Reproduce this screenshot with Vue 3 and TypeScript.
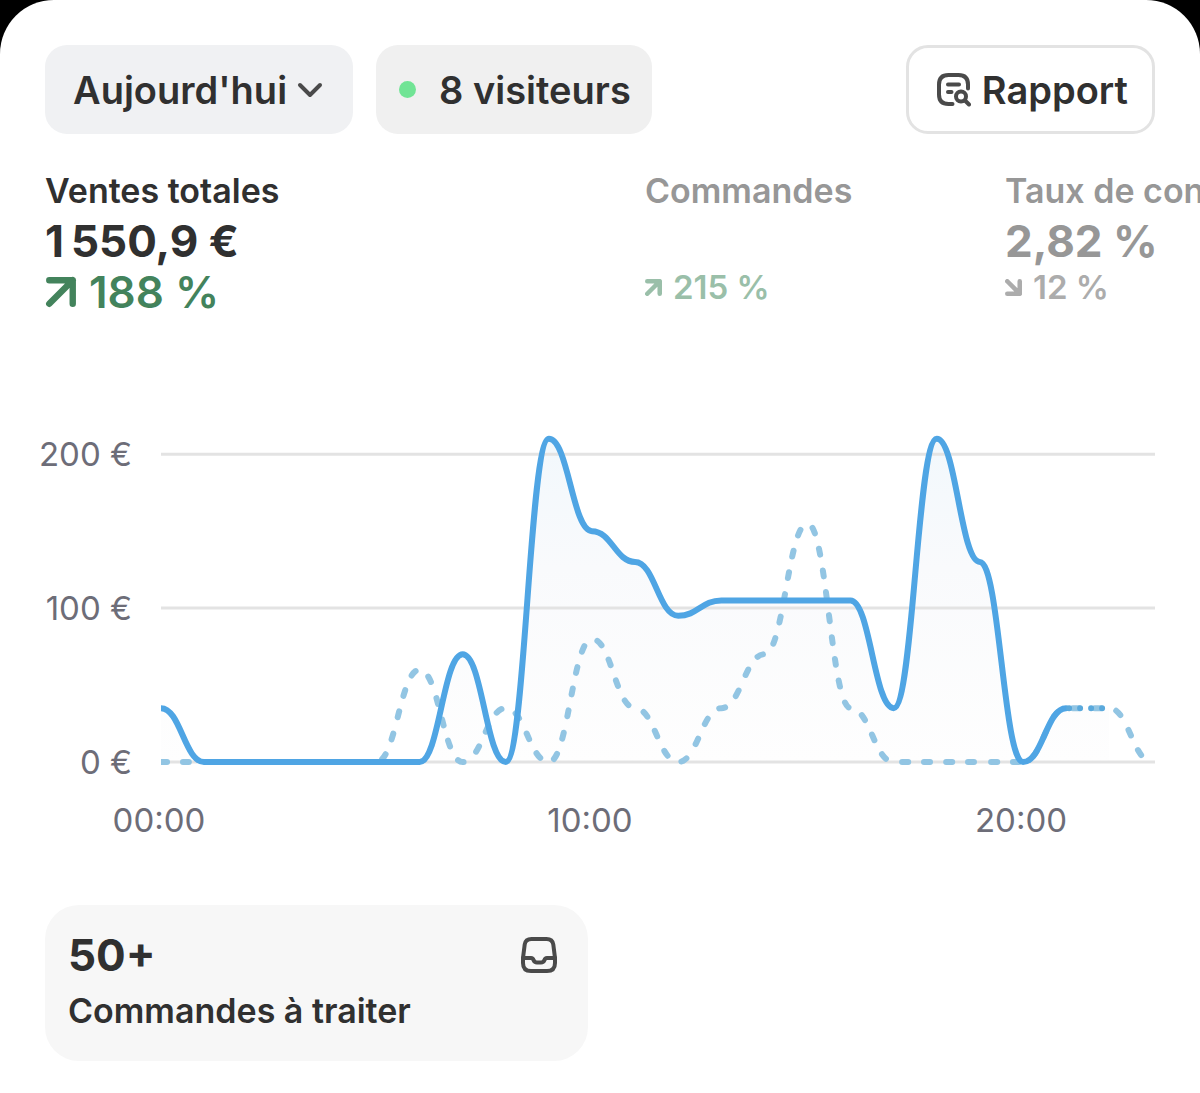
<script setup lang="ts">
interface Metric {
  name: string
  value: string
  delta: string
  trend: 'up' | 'down'
}

const metrics: Metric[] = [
  { name: 'Ventes totales', value: '1\u202f550,9 €', delta: '188 %', trend: 'up' },
  { name: 'Commandes', value: '', delta: '215 %', trend: 'up' },
  { name: 'Taux de conversion', value: '2,82 %', delta: '12 %', trend: 'down' },
]

// Hourly sales in euros
const today: number[] = [35, 0, 0, 0, 0, 0, 0, 70, 0, 210, 150, 130, 95, 105, 105, 105, 105, 35, 210, 130, 0, 35]
const yesterday: number[] = [0, 0, 0, 0, 0, 0, 60, 0, 35, 0, 80, 35, 0, 35, 70, 155, 35, 0, 0, 0, 0, 35, 35, 0]

const left = 161
const right = 1155
const base = 352
const stepX = 43.1
const euro = 1.539
const tension = 0.45

const xAt = (hour: number): number => left + hour * stepX
const yAt = (value: number): number => base - value * euro

function curve(values: number[]): string {
  let d = `M${xAt(0)} ${yAt(values[0])}`
  for (let i = 1; i < values.length; i++) {
    const k = stepX * tension
    d += `C${xAt(i - 1) + k} ${yAt(values[i - 1])} ${xAt(i) - k} ${yAt(values[i])} ${xAt(i)} ${yAt(values[i])}`
  }
  return d
}

const todayLine = curve(today)
const yesterdayLine = curve(yesterday)
const area = `${todayLine}H${xAt(22)}V${base}H${left}Z`
const projection = `M${xAt(21) + 3} ${yAt(35)}H${xAt(22)}`

const yTicks = [200, 100, 0]
const xTicks = [
  { hour: 0, label: '00:00' },
  { hour: 10, label: '10:00' },
  { hour: 20, label: '20:00' },
]
</script>

<template>
  <main class="sheet">
    <header class="toolbar">
      <button type="button" class="chip period">
        Aujourd'hui
        <svg class="chevron" viewBox="0 0 26 16" aria-hidden="true"><path d="M3 3l10 10L23 3" /></svg>
      </button>
      <div class="chip visitors"><span class="dot"></span>8 visiteurs</div>
      <button type="button" class="chip report">
        <svg class="report-icon" viewBox="0 0 34 34" aria-hidden="true">
          <path d="M15.500 31H11.500Q2 31 2 21.500V11.500Q2 2 11.500 2H21.500Q31 2 31 11.500V15.500" />
          <path d="M11 11.500H22M11 19H14.500" />
          <circle cx="24" cy="23.500" r="5" />
          <path d="M28 27.500L32 31.500" />
        </svg>
        Rapport
      </button>
    </header>

    <section class="metrics">
      <div v-for="(m, i) in metrics" :key="m.name" class="metric" :class="{ active: i === 0 }">
        <h2 class="name">{{ m.name }}</h2>
        <p class="value">{{ m.value }}</p>
        <p class="delta" :class="m.trend">
          <svg class="arrow" viewBox="0 0 30 30" aria-hidden="true">
            <path v-if="m.trend === 'up'" d="M4 4H26V26M26 4L4 26" />
            <path v-else d="M26 4V26H4M26 26L4 4" />
          </svg>
          {{ m.delta }}
        </p>
      </div>
    </section>

    <svg class="chart" viewBox="0 0 1200 440" role="img" aria-label="Ventes totales par heure">
      <defs>
        <linearGradient id="fade" x1="0" y1="0" x2="0" y2="1">
          <stop offset="0" stop-color="#f2f8fc" />
          <stop offset="0.4" stop-color="#f9fafc" />
          <stop offset="1" stop-color="#fefefe" />
        </linearGradient>
        <clipPath id="plot"><rect :x="left" y="0" :width="right - left" height="360" /></clipPath>
      </defs>
      <path :d="area" fill="url(#fade)" />
      <g v-for="t in yTicks" :key="t">
        <line class="grid" :x1="left" :x2="right" :y1="yAt(t)" :y2="yAt(t)" />
        <text class="tick" x="132" :y="yAt(t) + 12" text-anchor="end">{{ t }} €</text>
      </g>
      <g clip-path="url(#plot)">
        <path class="line yesterday" :d="yesterdayLine" />
        <path class="line today" :d="todayLine" />
        <path class="line projection" :d="projection" />
      </g>
      <text v-for="t in xTicks" :key="t.label" class="tick" :x="xAt(t.hour) - 2" y="422" text-anchor="middle">{{ t.label }}</text>
    </svg>

    <a href="#commandes" class="todo">
      <span class="todo-text">
        <strong class="count">50+</strong>
        <span class="label">Commandes à traiter</span>
      </span>
      <svg class="inbox" viewBox="0 0 38 38" aria-hidden="true">
        <path d="M11.500 3H26.500Q32.500 3 33.300 8.500L35 22V27Q35 35 27 35H11Q3 35 3 27V22L4.700 8.500Q5.500 3 11.500 3Z" />
        <path d="M3 22H11Q13 22 13.500 24Q14.500 26.500 17 26.500H21Q23.500 26.500 24.500 24Q25 22 27 22H35" />
      </svg>
    </a>
  </main>
</template>

<style>
body {
  margin: 0;
  background: #000;
}
</style>

<style scoped>
.sheet {
  box-sizing: border-box;
  min-height: 100vh;
  padding: 45px 0 33px;
  overflow: hidden;
  border-radius: 54px 54px 0 0;
  background: #fff;
  color: #303030;
  font-family: Inter, "Liberation Sans", sans-serif;
}

svg {
  display: block;
  flex: none;
  fill: none;
  stroke-linecap: round;
  stroke-linejoin: round;
}

.toolbar {
  display: flex;
  gap: 23px;
  padding: 0 45px;
}

.chip {
  box-sizing: border-box;
  display: flex;
  align-items: center;
  height: 89px;
  border: 0;
  border-radius: 22px;
  padding: 0 28px;
  background: #f0f0f0;
  color: inherit;
  font: 600 38px/48px Inter, "Liberation Sans", sans-serif;
  white-space: nowrap;
}

.period {
  gap: 10px;
  padding: 0 30px 0 28px;
  background: #f0f1f3;
}

.chevron {
  width: 26px;
  height: 16px;
  stroke: #4a4a4a;
  stroke-width: 4;
}

.visitors {
  gap: 23px;
  padding: 0 21px 0 23px;
}

.dot {
  width: 17px;
  height: 17px;
  border-radius: 50%;
  background: #71e495;
}

.report {
  gap: 11px;
  margin-left: auto;
  border: 3px solid #e3e3e3;
  padding: 0 24px 0 28px;
  background: #fff;
}

.report-icon {
  width: 34px;
  height: 34px;
  stroke: #4a4a4a;
  stroke-width: 4;
}

.metrics {
  display: flex;
  padding: 37px 0 0 45px;
}

.metric {
  flex: 0 0 360px;
  color: #979797;
  font-weight: 700;
  white-space: nowrap;
}

.metric.active {
  flex-basis: 600px;
  color: #303030;
}

.name {
  margin: 0;
  font-size: 34px;
  font-weight: 600;
  line-height: 40px;
}

.value {
  height: 60px;
  margin: 0;
  font-size: 44px;
  line-height: 60px;
}

.delta {
  display: flex;
  align-items: center;
  gap: 11px;
  margin: 0;
  font-size: 33px;
  font-weight: 600;
  line-height: 32px;
}

.up {
  color: #9abfa9;
}

.down {
  color: #acacac;
}

.active .delta {
  gap: 12px;
  color: #43835c;
  font-size: 44px;
  line-height: 42px;
}

.arrow {
  width: 17px;
  height: 17px;
  stroke: currentColor;
  stroke-width: 8;
}

.active .arrow {
  width: 32px;
  height: 32px;
  stroke-width: 6;
}

.chart {
  width: 100%;
  height: auto;
  margin-top: 97px;
}

.grid {
  stroke: #e3e3e3;
  stroke-width: 3;
  stroke-linecap: butt;
}

.tick {
  fill: #6d6d78;
  font-size: 33px;
}

.line {
  stroke-width: 6;
}

.yesterday {
  stroke: #92c5e3;
  stroke-dasharray: 6 16 6 16 6 16 6 17;
}

.today {
  stroke: #4fa5e4;
}

.projection {
  stroke: #5aa9dc;
  stroke-dasharray: 0 11;
}

.todo {
  box-sizing: border-box;
  display: flex;
  align-items: flex-start;
  justify-content: space-between;
  width: calc(50% - 57px);
  margin: 55px 0 0 45px;
  border-radius: 34px;
  padding: 22px 30px 22px 23px;
  background: #f7f7f7;
  color: inherit;
  font-weight: 600;
  text-decoration: none;
}

.todo-text {
  display: flex;
  flex-direction: column;
}

.count {
  font-size: 44px;
  font-weight: 700;
  line-height: 56px;
}

.label {
  font-size: 34px;
  line-height: 56px;
}

.inbox {
  width: 38px;
  height: 38px;
  margin-top: 9px;
  stroke: #4a4a4a;
  stroke-width: 4;
}
</style>
